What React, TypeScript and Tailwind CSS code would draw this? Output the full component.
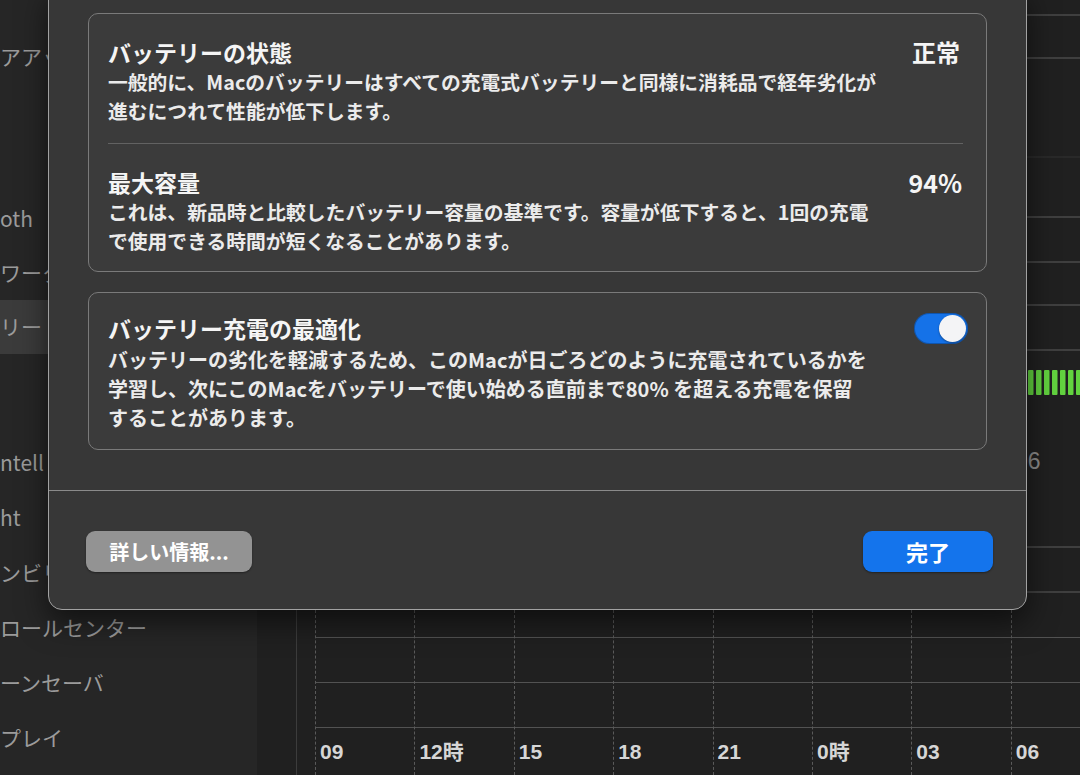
import React from 'react';

const sidebarTop = ['アアッ', '', '', 'oth', 'ワーク', 'リー', ''];
const sidebarBottom = ['ntell', 'ht', 'ンビリ', 'ロールセンター', 'ーンセーバ', 'プレイ'];
const hours = ['09', '12時', '15', '18', '21', '0時', '03', '06'];

function Sidebar() {
  return (
    <div className="w-[257px] shrink-0 bg-[#262626] flex flex-col pt-[30px] text-[21px] text-[#9b9b9b] whitespace-nowrap">
      {sidebarTop.map((label, i) => (
        <div
          key={i}
          className={`h-[54px] flex items-center ${label === 'リー' ? 'bg-[#3b3b3b] rounded-r-[8px] mr-[12px]' : ''}`}
        >
          {label}
        </div>
      ))}
      <div className="mt-[27px] flex flex-col">
        {sidebarBottom.map((label) => (
          <div key={label} className="h-[55px] flex items-center">
            {label}
          </div>
        ))}
      </div>
    </div>
  );
}

function LevelChart() {
  // upper chart, mostly hidden behind the sheet
  const lines = [15, 58, 217, 262, 305, 350, 547, 592];
  const bars = Array.from({ length: 8 }, (_, i) => 771 + i * 8);
  return (
    <svg width="823" height="610" className="block">
      {lines.map((y) => (
        <line key={y} x1="0" x2="823" y1={y} y2={y} stroke="#4a4a4a" strokeWidth="1.5" />
      ))}
      <line x1="0" x2="823" y1="157" y2="157" stroke="#333" strokeWidth="1" />
      {bars.map((x) => (
        <rect key={x} x={x} y="370" width="5.5" height="25" rx="1" fill="#62d23f" />
      ))}
      <text x="758" y="469" fill="#8c8c8c" fontSize="23" fontFamily="Liberation Sans, sans-serif">
        06
      </text>
    </svg>
  );
}

function UsageChart() {
  return (
    <div className="flex-1 flex overflow-hidden">
      <div className="w-[40px] shrink-0 border-r border-[#3c3c3c]" />
      <div className="w-[18px] shrink-0" />
      {hours.map((h) => (
        <div key={h} className="w-[99.4px] shrink-0 flex flex-col border-l border-dashed border-[#5a5a5a]">
          <div className="h-[27px]" />
          <div className="h-[45px] border-t border-[#525252]" />
          <div className="h-[45px] border-t border-[#525252]" />
          <div className="flex-1 border-t border-[#525252] pt-[12px] pl-[4px]">
            <span className="text-[21px] leading-[24px] font-bold text-[#d6d6d6] font-['Liberation_Sans','Noto_Sans_CJK_JP',sans-serif]">
              {h}
            </span>
          </div>
        </div>
      ))}
    </div>
  );
}

function Toggle() {
  return (
    <div className="w-[54px] h-[31px] rounded-full bg-[#1572e8] flex items-center justify-end pr-[2px] shadow-[inset_0_0_0_1px_rgba(0,0,0,0.25)]">
      <div className="w-[27px] h-[27px] rounded-full bg-[#f4f4f6] shadow-[0_1px_2px_rgba(0,0,0,0.4)]" />
    </div>
  );
}

function BatteryDialog() {
  return (
    <div className="absolute left-[48px] top-[-12px] w-[979px] rounded-b-[14px] bg-[#373737] border border-[#a2a2a2] shadow-[0_12px_30px_rgba(0,0,0,0.55)] flex flex-col">
      <div className="px-[39px] pt-[24px] pb-[40px] flex flex-col gap-[20px]">
        {/* health + capacity */}
        <div className="rounded-[10px] border border-[#7a7a7a] bg-[#3b3b3b]">
          <div className="pl-[19px] pr-[26px] pt-[23px] pb-[18px]">
            <div className="h-[30px] flex items-center justify-between">
              <span className="text-[23px] leading-[30px] font-bold text-[#f5f5f5]">バッテリーの状態</span>
              <span className="text-[24px] leading-[30px] font-bold text-[#f5f5f5]">正常</span>
            </div>
            <p className="text-[19.8px] leading-[29px] font-semibold text-[#ebebeb] whitespace-nowrap">
              一般的に、Macのバッテリーはすべての充電式バッテリーと同様に消耗品で経年劣化が
              <br />
              進むにつれて性能が低下します。
            </p>
          </div>
          <div className="h-px bg-[#626262] ml-[19px] mr-[23px]" />
          <div className="pl-[19px] pr-[24px] pt-[23px] pb-[16px]">
            <div className="h-[30px] flex items-center justify-between">
              <span className="text-[23px] leading-[30px] font-bold text-[#f5f5f5]">最大容量</span>
              <span className="text-[25px] leading-[30px] font-bold text-[#f5f5f5]">94%</span>
            </div>
            <p className="text-[19.8px] leading-[29px] font-semibold text-[#ebebeb] whitespace-nowrap">
              これは、新品時と比較したバッテリー容量の基準です。容量が低下すると、1回の充電
              <br />
              で使用できる時間が短くなることがあります。
            </p>
          </div>
        </div>

        {/* optimized charging */}
        <div className="rounded-[10px] border border-[#7a7a7a] bg-[#3b3b3b] pl-[19px] pr-[18px] pt-[20px] pb-[17px]">
          <div className="h-[30px] flex items-center justify-between">
            <span className="text-[23px] leading-[30px] font-bold text-[#f5f5f5]">バッテリー充電の最適化</span>
            <Toggle />
          </div>
          <p className="mt-[2px] text-[20px] leading-[29px] font-semibold text-[#ebebeb] whitespace-nowrap">
            バッテリーの劣化を軽減するため、このMacが日ごろどのように充電されているかを
            <br />
            学習し、次にこのMacをバッテリーで使い始める直前まで80% を超える充電を保留
            <br />
            することがあります。
          </p>
        </div>
      </div>

      <div className="border-t border-[#8a8a8a] pl-[37px] pr-[33px] pt-[40px] pb-[37px] flex items-center justify-between">
        <button className="w-[166px] h-[41px] rounded-[9px] bg-[#939393] text-white text-[20px] font-semibold shadow-[0_1px_2px_rgba(0,0,0,0.4)]">
          詳しい情報...
        </button>
        <button className="w-[130px] h-[41px] rounded-[9px] bg-[#1474ec] text-white text-[22px] font-semibold shadow-[0_1px_2px_rgba(0,0,0,0.4)]">
          完了
        </button>
      </div>
    </div>
  );
}

export default function App() {
  return (
    <div className="relative w-[1080px] h-[775px] overflow-hidden bg-[#202020] font-['Noto_Sans_CJK_JP','Noto_Sans',sans-serif]">
      <div className="flex h-full">
        <Sidebar />
        <div className="flex-1 flex flex-col overflow-hidden">
          <div className="h-[610px] shrink-0">
            <LevelChart />
          </div>
          <UsageChart />
        </div>
      </div>
      <BatteryDialog />
    </div>
  );
}
